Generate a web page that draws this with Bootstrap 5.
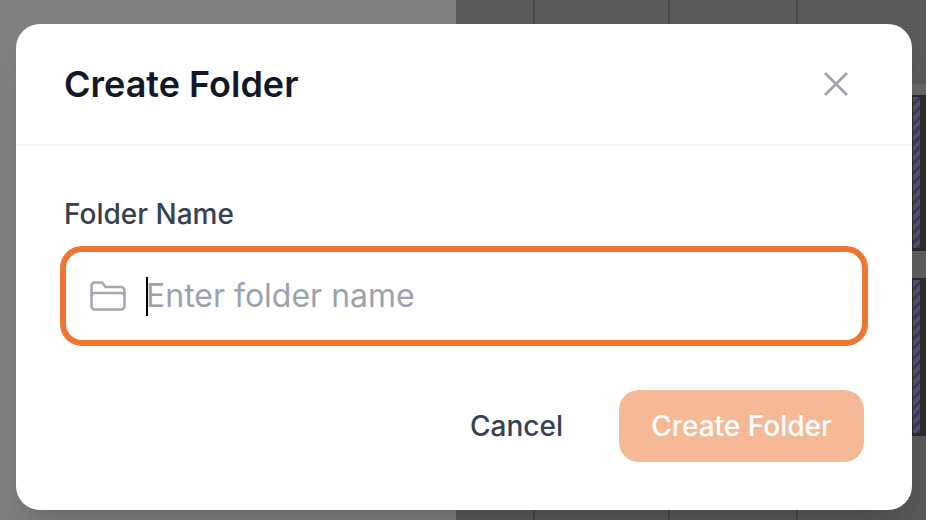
<!DOCTYPE html>
<html lang="en">
<head>
<meta charset="utf-8">
<title>Create Folder</title>
<link href="https://cdn.jsdelivr.net/npm/bootstrap@5.3.0/dist/css/bootstrap.min.css" rel="stylesheet">
<style>
html,body{height:520px;overflow:hidden}
body{font-family:Inter,"Liberation Sans",sans-serif;background:#5a5a5a;position:relative}
.backdrop-art{height:520px}
.art-side{width:456px;background:#808080}
.art-cell{background:#5a5a5a;border-right:2px solid #484848}
.cell-a{width:79px}
.cell-b{width:135px}
.cell-c{width:128px}
.cell-d{width:128px}
.strip-plain{height:84px;background:#5a5a5a}
.strip-band{height:11px;background:#666}
.strip-block{height:156px;border-top:2px solid #2a2a2a;border-bottom:3px solid #2a2a2a;background:#2c2c2c;padding-left:115px}
.strip-block-low{height:158px}
.strip-gap{height:27px;background:#5e5e5e}
.strip-end{height:84px;background:#5a5a5a}
.hatch-bar{width:7px;height:100%;background:repeating-linear-gradient(-45deg,#43346f 0 3px,#57545f 3px 7px)}
.dialog-box{position:absolute;left:16px;top:24px;width:896px;height:486px;border-radius:24px;background:#fff;box-shadow:0 40px 50px -10px rgba(0,0,0,.1),0 16px 20px -12px rgba(0,0,0,.1)}
.dialog-head{height:122px;padding:0 48px;border-bottom:2px solid #f3f4f6}
.dialog-title{font-size:36px;font-weight:600;color:#111827;margin:0;line-height:1}
.x-btn{width:40px;height:40px;padding:0;border:0;background:none;margin-right:8px}
.dialog-body{padding:52px 48px 0}
.field-label{font-size:28px;font-weight:500;color:#374151;line-height:32px;margin-bottom:16px;display:block}
.field-wrap{height:100px;margin:0 -4px;border:6px solid #ee7630;border-radius:22px;padding-left:24px;gap:20px}
.field-input{border:0;outline:0;flex:1;font-size:32px;color:#111827;padding:0;background:none;font-family:inherit;min-width:0}
.field-input::placeholder{color:#9ca3af;opacity:1}
.caret-mark{width:2px;height:39px;background:#000;margin-right:-22px;flex:none}
.act-row{margin-top:44px;gap:32px}
.btn-cancel{font-size:28px;font-weight:500;color:#374151;background:none;border:0;padding:0 24px;height:72px}
.btn-create{font-size:28px;font-weight:500;color:#fff;background:#f5b998;border:0;border-radius:20px;height:72px;width:245px;padding:0}
</style>
</head>
<body>
<div class="backdrop-art d-flex">
  <div class="art-side"></div>
  <div class="art-cell cell-a"></div>
  <div class="art-cell cell-b"></div>
  <div class="art-cell cell-c"></div>
  <div class="cell-d d-flex flex-column">
    <div class="strip-plain"></div>
    <div class="strip-band"></div>
    <div class="strip-block"><div class="hatch-bar"></div></div>
    <div class="strip-gap"></div>
    <div class="strip-block strip-block-low"><div class="hatch-bar"></div></div>
    <div class="strip-end"></div>
  </div>
</div>
<div class="dialog-box">
  <div class="dialog-head d-flex align-items-center justify-content-between">
    <h1 class="dialog-title">Create Folder</h1>
    <button class="x-btn d-flex align-items-center justify-content-center" aria-label="Close">
      <svg width="24" height="24" viewBox="0 0 24 24" fill="none" stroke="#9ca3af" stroke-width="2.6"><path d="M1 1 23 23M23 1 1 23"/></svg>
    </button>
  </div>
  <div class="dialog-body">
    <label class="field-label" for="fname">Folder Name</label>
    <div class="field-wrap d-flex align-items-center">
      <svg width="36" height="30" viewBox="0 0 36 30" fill="none" stroke="#a3a8b3" stroke-width="2.6" stroke-linejoin="round"><path d="M1.500 5A3.500 3.500 0 0 1 5 1.500h7l3.500 4.500H31A3.500 3.500 0 0 1 34.500 9.500V25A3.500 3.500 0 0 1 31 28.500H5A3.500 3.500 0 0 1 1.500 25Z"/><path d="M1.500 15A3 3 0 0 1 4.500 12h27A3 3 0 0 1 34.500 15"/></svg>
      <span class="caret-mark"></span>
      <input class="field-input" id="fname" type="text" placeholder="Enter folder name">
    </div>
    <div class="act-row d-flex justify-content-end align-items-center">
      <button class="btn-cancel">Cancel</button>
      <button class="btn-create">Create Folder</button>
    </div>
  </div>
</div>
<script src="https://cdn.jsdelivr.net/npm/bootstrap@5.3.0/dist/js/bootstrap.bundle.min.js"></script>
</body>
</html>
